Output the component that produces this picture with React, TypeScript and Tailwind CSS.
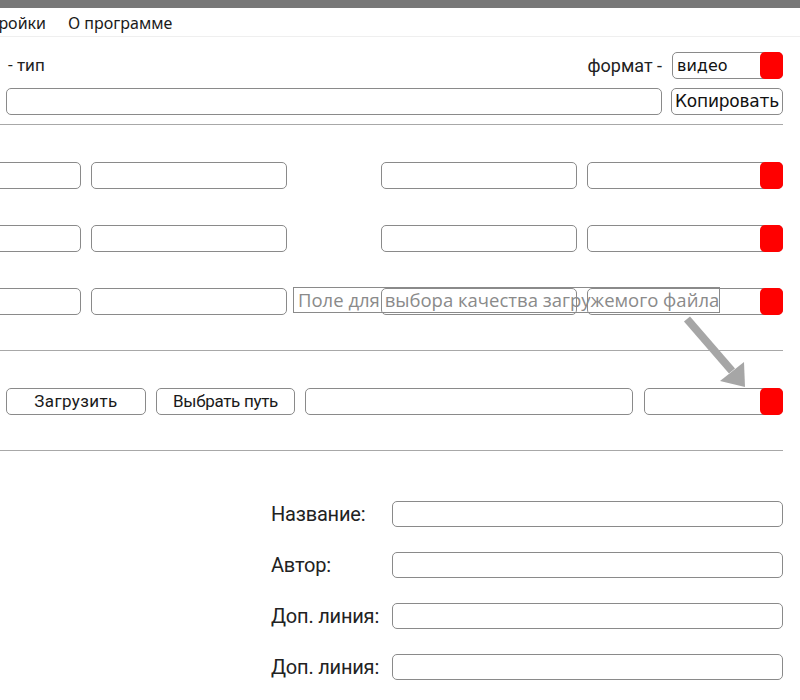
import React from 'react';

const box = 'h-[27px] border border-[#8a8a8a] rounded-[5px] bg-white';

function Select({ w, text }: { w: string; text?: string }) {
  return <div className={`${box} ${w} flex items-center overflow-visible`}>
      <span className="pl-[4px] text-[16px] text-[#111] font-['DejaVu_Sans',sans-serif]">{text}</span>
      <div className="ml-auto w-[23px] self-stretch -my-px -mr-px bg-[#ff0000] rounded-[5px]" />
    </div>;
}

function QualityRow() {
  return <div className="flex h-[27px]">
      <div className={`${box} w-[196px] -ml-[115px] shrink-0`} />
      <div className={`${box} w-[196px] ml-[10px] shrink-0`} />
      <div className={`${box} w-[196px] ml-[94px] shrink-0`} />
      <Select w="w-[196px] ml-[10px] shrink-0" />
    </div>;
}

function Field({ label }: { label: string }) {
  return <div className="flex items-center h-[26px]">
      <span className="w-[121px] text-[20px] tracking-[-0.2px] text-[#222] font-['Roboto',sans-serif]">{label}</span>
      <div className={`${box} !h-[26px] w-[391px]`} />
    </div>;
}

export default function App() {
  return <div className="relative w-[800px] h-[700px] bg-white overflow-hidden font-['Noto_Sans',sans-serif] text-[#1a1a1a]">
      <div className="h-[8px] bg-[#787878]" />
      <div className="h-[29px] pt-[2px] flex items-center border-b border-[#efefef] text-[16px]">
        <div className="w-[46px] overflow-hidden flex justify-end whitespace-nowrap">
          <span>Настройки</span>
        </div>
        <span className="ml-[22px]">О программе</span>
      </div>

      <div className="pr-[17px]">
        <div className="pl-[6px]">
          <div className="mt-[15px] flex items-center justify-between h-[27px]">
            <span className="ml-[2px] text-[17px] text-[#222] font-['Roboto',sans-serif]">- тип</span>
            <div className="flex items-center">
              <span className="text-[18px] text-[#222] font-['Roboto',sans-serif] mr-[10px]">формат -</span>
              <Select w="w-[111px]" text="видео" />
            </div>
          </div>
          <div className="mt-[9px] flex h-[27px]">
            <div className={`${box} flex-1`} />
            <button className={`${box} w-[112px] ml-[9px] text-[17px] text-[#111] font-['DejaVu_Sans',sans-serif] tracking-[-0.2px]`}>Копировать</button>
          </div>
        </div>
        <div className="mt-[9px] h-px bg-[#a8a8a8]" />

        <div className="mt-[37px] flex flex-col gap-[36px]">
          <QualityRow />
          <QualityRow />
          <QualityRow />
        </div>

        <div className="mt-[35px] h-px bg-[#a8a8a8]" />

        <div className="mt-[37px] pl-[6px] flex h-[27px] font-['Roboto',sans-serif] text-[17px] text-[#1a1a1a]">
          <button className={`${box} w-[140px] tracking-[0.4px]`}>Загрузить</button>
          <button className={`${box} w-[139px] ml-[10px] tracking-[-0.3px]`}>Выбрать путь</button>
          <div className={`${box} w-[328px] ml-[10px]`} />
          <Select w="w-[139px] ml-[11px]" />
        </div>

        <div className="mt-[35px] h-px bg-[#a8a8a8]" />

        <div className="mt-[50px] ml-[271px] flex flex-col gap-[25px]">
          <Field label="Название:" />
          <Field label="Автор:" />
          <Field label="Доп. линия:" />
          <Field label="Доп. линия:" />
        </div>
      </div>

      <div className="absolute left-[293px] top-[287px] w-[427px] h-[26px] border border-[#8a8a8a] flex items-center pl-[4px] text-[18.5px] text-[#8a8a8a] font-['Open_Sans',sans-serif] whitespace-nowrap">
        Поле для выбора качества загружемого файла
      </div>

      <svg className="absolute left-0 top-0 pointer-events-none" width="800" height="700">
        <line x1="687" y1="319" x2="732" y2="371" stroke="#a6a6a6" strokeWidth="8" />
        <polygon points="745,387 720,381 744,362" fill="#a6a6a6" />
      </svg>
    </div>;
}
